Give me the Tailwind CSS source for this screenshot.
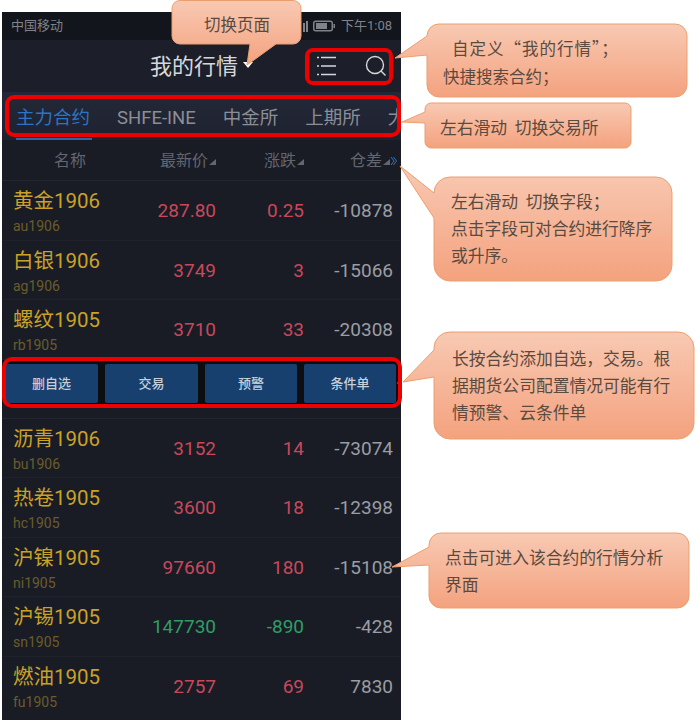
<!DOCTYPE html>
<html lang="zh-CN">
<head>
  <meta charset="UTF-8" />
  <title>我的行情</title>
  <script src="https://cdn.jsdelivr.net/npm/@tailwindcss/browser@4"></script>
</head>
<body class="bg-white font-['Roboto','Noto_Sans_CJK_SC',sans-serif]">
<div class="relative w-[699px] h-[720px] overflow-hidden pt-[12px]">

  <!-- phone -->
  <div class="ml-[2px] w-[399px] h-[708px] bg-[#191c25]">
    <!-- status bar -->
    <div class="h-[28px] bg-[#13151c] flex items-center pl-[9px] pr-[9px] text-[13px] text-[#7f828a]">
      <span>中国移动</span>
      <div class="ml-auto flex items-center gap-[5px]">
        <div class="flex items-end gap-[1px] h-[11px]">
          <div class="w-[2px] h-[9px] bg-[#7f828a]"></div>
          <div class="w-[2px] h-[11px] bg-[#7f828a]"></div>
        </div>
        <svg width="23" height="12" viewBox="0 0 23 12"><rect x="0.75" y="1.25" width="18.5" height="9.5" rx="2" fill="none" stroke="#7f828a" stroke-width="1.5"/><rect x="3" y="3" width="11" height="6" fill="#7f828a"/><rect x="20.5" y="4" width="1.5" height="4" fill="#7f828a"/></svg>
        <span>下午1:08</span>
      </div>
    </div>
    <!-- title bar -->
    <div class="h-[52px] bg-[#1c1f2a] flex items-center pl-[148px] pr-[14px]">
      <span class="text-[22px] text-[#d6d7da]">我的行情</span>
      <div class="ml-[5px] mt-[-3px] w-0 h-0 border-x-[5px] border-x-transparent border-t-[6px] border-t-white"></div>
      <div class="ml-auto flex items-center gap-[28px]">
        <svg width="22" height="22" viewBox="0 0 22 22" fill="none" stroke="#d6d7da" stroke-width="1.3"><path d="M2 2.5h2M6 2.5h15M2 11h2M6 11h15M2 19.5h2M6 19.5h15"/></svg>
        <svg width="22" height="22" viewBox="0 0 22 22" fill="none" stroke="#d6d7da" stroke-width="1.4"><circle cx="10" cy="10" r="8.5"/><path d="M16 16l4.5 4.5"/></svg>
      </div>
    </div>
    <!-- exchange tabs -->
    <div class="h-[48px] bg-gradient-to-b from-[#232838] to-[#1e2230] overflow-hidden">
      <div class="flex gap-[27px] pl-[14px] pt-[13px] text-[18.5px] leading-[26px] text-[#8b8e96] whitespace-nowrap">
        <span class="w-[75px] text-[#2c74c4]">主力合约</span>
        <span class="w-[81px]">SHFE-INE</span>
        <span>中金所</span>
        <span>上期所</span>
        <span>大商所</span>
      </div>
      <div class="ml-[14px] mt-[7px] w-[76px] h-[2px] bg-[#2a67ad]"></div>
    </div>
    <!-- column headers -->
    <div class="h-[41px] grid grid-cols-[114px_88px_88px_93px] pl-[12px] pt-[2px] items-center text-[16px] text-[#63666e] border-b border-[#23262f]">
      <span class="pl-[40px]">名称</span>
      <div class="flex items-center justify-end gap-[1px]"><span>最新价</span><div class="w-0 h-0 mt-[2px] border-l-[7px] border-l-transparent border-b-[6px] border-b-[#63666e]"></div></div>
      <div class="flex items-center justify-end gap-[1px]"><span>涨跌</span><div class="w-0 h-0 mt-[2px] border-l-[7px] border-l-transparent border-b-[6px] border-b-[#63666e]"></div></div>
      <div class="flex items-center justify-end">
        <span>仓差</span>
        <div class="w-0 h-0 mt-[2px] ml-[1px] border-l-[7px] border-l-transparent border-b-[6px] border-b-[#63666e]"></div>
        <svg width="7" height="10" viewBox="0 0 7 10" fill="none" stroke="#2c74c4" stroke-width="1"><path d="M1 1l3 4-3 4M3.5 1l3 4-3 4"/></svg>
      </div>
    </div>

    <!-- rows -->
    <div class="h-[59.5px] grid grid-cols-[115px_88px_88px_89px] pl-[11px] pt-[2px] items-center text-[19px] text-[#9a9da3] border-b border-[#1f222b]">
      <div class="self-start pt-[5px]"><div class="text-[20.5px] leading-[26px] text-[#c9a227]">黄金1906</div><div class="text-[14px] leading-[20px] mt-[2px] text-[#6a5c2b]">au1906</div></div>
      <span class="text-right text-[#c8485a]">287.80</span><span class="text-right text-[#c8485a]">0.25</span><span class="text-right">-10878</span>
    </div>
    <div class="h-[59.5px] grid grid-cols-[115px_88px_88px_89px] pl-[11px] pt-[2px] items-center text-[19px] text-[#9a9da3] border-b border-[#1f222b]">
      <div class="self-start pt-[5px]"><div class="text-[20.5px] leading-[26px] text-[#c9a227]">白银1906</div><div class="text-[14px] leading-[20px] mt-[2px] text-[#6a5c2b]">ag1906</div></div>
      <span class="text-right text-[#c8485a]">3749</span><span class="text-right text-[#c8485a]">3</span><span class="text-right">-15066</span>
    </div>
    <div class="h-[59.5px] grid grid-cols-[115px_88px_88px_89px] pl-[11px] pt-[2px] items-center text-[19px] text-[#9a9da3] border-b border-[#1f222b]">
      <div class="self-start pt-[5px]"><div class="text-[20.5px] leading-[26px] text-[#c9a227]">螺纹1905</div><div class="text-[14px] leading-[20px] mt-[2px] text-[#6a5c2b]">rb1905</div></div>
      <span class="text-right text-[#c8485a]">3710</span><span class="text-right text-[#c8485a]">33</span><span class="text-right">-20308</span>
    </div>

    <!-- long-press actions -->
    <div class="h-[59px] bg-[#191c25] border-b border-[#23262f]">
      <div class="h-[44px] bg-[#0d0e11] flex items-center gap-[7px] pl-[3px] text-[13px] font-medium text-[#c6cfda]">
        <button class="w-[93px] h-[39px] mt-[4px] rounded-[2px] bg-[#17406e]">删自选</button>
        <button class="w-[93px] h-[39px] mt-[4px] rounded-[2px] bg-[#17406e]">交易</button>
        <button class="w-[92px] h-[39px] mt-[4px] rounded-[2px] bg-[#17406e]">预警</button>
        <button class="w-[92px] h-[39px] mt-[4px] rounded-[2px] bg-[#17406e] relative">条件单<span class="absolute right-[-5px] top-[15px] w-0 h-0 border-y-[4px] border-y-transparent border-r-[4px] border-r-[#8b8e96]"></span></button>
      </div>
    </div>

    <div class="h-[59.5px] grid grid-cols-[115px_88px_88px_89px] pl-[11px] pt-[2px] items-center text-[19px] text-[#9a9da3] border-b border-[#1f222b]">
      <div class="self-start pt-[5px]"><div class="text-[20.5px] leading-[26px] text-[#c9a227]">沥青1906</div><div class="text-[14px] leading-[20px] mt-[2px] text-[#6a5c2b]">bu1906</div></div>
      <span class="text-right text-[#c8485a]">3152</span><span class="text-right text-[#c8485a]">14</span><span class="text-right">-73074</span>
    </div>
    <div class="h-[59.5px] grid grid-cols-[115px_88px_88px_89px] pl-[11px] pt-[2px] items-center text-[19px] text-[#9a9da3] border-b border-[#1f222b]">
      <div class="self-start pt-[5px]"><div class="text-[20.5px] leading-[26px] text-[#c9a227]">热卷1905</div><div class="text-[14px] leading-[20px] mt-[2px] text-[#6a5c2b]">hc1905</div></div>
      <span class="text-right text-[#c8485a]">3600</span><span class="text-right text-[#c8485a]">18</span><span class="text-right">-12398</span>
    </div>
    <div class="h-[59.5px] grid grid-cols-[115px_88px_88px_89px] pl-[11px] pt-[2px] items-center text-[19px] text-[#9a9da3] border-b border-[#1f222b]">
      <div class="self-start pt-[5px]"><div class="text-[20.5px] leading-[26px] text-[#c9a227]">沪镍1905</div><div class="text-[14px] leading-[20px] mt-[2px] text-[#6a5c2b]">ni1905</div></div>
      <span class="text-right text-[#c8485a]">97660</span><span class="text-right text-[#c8485a]">180</span><span class="text-right">-15108</span>
    </div>
    <div class="h-[59.5px] grid grid-cols-[115px_88px_88px_89px] pl-[11px] pt-[2px] items-center text-[19px] text-[#9a9da3] border-b border-[#1f222b]">
      <div class="self-start pt-[5px]"><div class="text-[20.5px] leading-[26px] text-[#c9a227]">沪锡1905</div><div class="text-[14px] leading-[20px] mt-[2px] text-[#6a5c2b]">sn1905</div></div>
      <span class="text-right text-[#2e9e64]">147730</span><span class="text-right text-[#2e9e64]">-890</span><span class="text-right">-428</span>
    </div>
    <div class="h-[59.5px] grid grid-cols-[115px_88px_88px_89px] pl-[11px] pt-[2px] items-center text-[19px] text-[#9a9da3]">
      <div class="self-start pt-[5px]"><div class="text-[20.5px] leading-[26px] text-[#c9a227]">燃油1905</div><div class="text-[14px] leading-[20px] mt-[2px] text-[#6a5c2b]">fu1905</div></div>
      <span class="text-right text-[#c8485a]">2757</span><span class="text-right text-[#c8485a]">69</span><span class="text-right">7830</span>
    </div>
  </div>

  <!-- red outlines -->
  <div class="absolute left-[305px] top-[48px] w-[88px] h-[37px] border-4 border-[#ee0000] rounded-[8px]"></div>
  <div class="absolute left-[5px] top-[95px] w-[396px] h-[42px] border-4 border-[#ee0000] rounded-[9px]"></div>
  <div class="absolute left-[2px] top-[357px] w-[400px] h-[51px] border-4 border-[#ee0000] rounded-[10px]"></div>

  <!-- callout shapes -->
  <svg class="absolute left-0 top-0" width="699" height="720" viewBox="0 0 699 720">
    <defs>
      <linearGradient id="peach" x1="0" y1="0" x2="0" y2="1">
        <stop offset="0" stop-color="#f8c9b3"/>
        <stop offset="1" stop-color="#f4a27e"/>
      </linearGradient>
    </defs>
    <g fill="url(#peach)" stroke="#eb9f6e" stroke-width="1">
      <path d="M180 0.5H293a8 8 0 0 1 8 8V36a8 8 0 0 1-8 8H276L247 65L250 44H180a8 8 0 0 1-8-8V8.5a8 8 0 0 1 8-8Z"/>
      <path d="M439 24H675a12 12 0 0 1 12 12V85a12 12 0 0 1-12 12H439a12 12 0 0 1-12-12V55L395 58L427 36a12 12 0 0 1 12-12Z"/>
      <path d="M431 103H625a6 6 0 0 1 6 6V142a6 6 0 0 1-6 6H431a6 6 0 0 1-6-6V123L402 122L425 112V109a6 6 0 0 1 6-6Z"/>
      <path d="M450 177H656a16 16 0 0 1 16 16V265a16 16 0 0 1-16 16H450a16 16 0 0 1-16-16V218L400 166L434 193a16 16 0 0 1 16-16Z"/>
      <path d="M450 332H678a16 16 0 0 1 16 16V423a16 16 0 0 1-16 16H450a16 16 0 0 1-16-16V377L403 382L434 350V348a16 16 0 0 1 16-16Z"/>
      <path d="M441 533H677a12 12 0 0 1 12 12V596a12 12 0 0 1-12 12H441a12 12 0 0 1-12-12V565L392 567L429 547V545a12 12 0 0 1 12-12Z"/>
    </g>
  </svg>

  <!-- callout texts -->
  <div class="absolute left-[204px] top-[11px] font-['Noto_Sans_CJK_SC',sans-serif] text-[16.5px] leading-[26px] text-[#5b4a3f] whitespace-nowrap">切换页面</div>
  <div class="absolute left-[443px] top-[34px] font-['Noto_Sans_CJK_SC',sans-serif] text-[16.5px] leading-[28px] text-[#5b4a3f] whitespace-nowrap"><div class="pl-[9px] tracking-[1px]">自定义“我的行情”；</div><div>快捷搜索合约；</div></div>
  <div class="absolute left-[440px] top-[113px] font-['Noto_Sans_CJK_SC',sans-serif] text-[16.8px] leading-[28px] text-[#5b4a3f] whitespace-pre">左右滑动  切换交易所</div>
  <div class="absolute left-[451px] top-[188px] font-['Noto_Sans_CJK_SC',sans-serif] text-[16.8px] leading-[27px] text-[#5b4a3f] whitespace-pre">左右滑动  切换字段；<br>点击字段可对合约进行降序<br>或升序。</div>
  <div class="absolute left-[452px] top-[345px] font-['Noto_Sans_CJK_SC',sans-serif] text-[16.8px] leading-[27px] text-[#5b4a3f] whitespace-nowrap">长按合约添加自选，交易。根<br>据期货公司配置情况可能有行<br>情预警、云条件单</div>
  <div class="absolute left-[445px] top-[544px] font-['Noto_Sans_CJK_SC',sans-serif] text-[16.8px] leading-[27px] text-[#5b4a3f] whitespace-nowrap">点击可进入该合约的行情分析<br>界面</div>
</div>
</body>
</html>
